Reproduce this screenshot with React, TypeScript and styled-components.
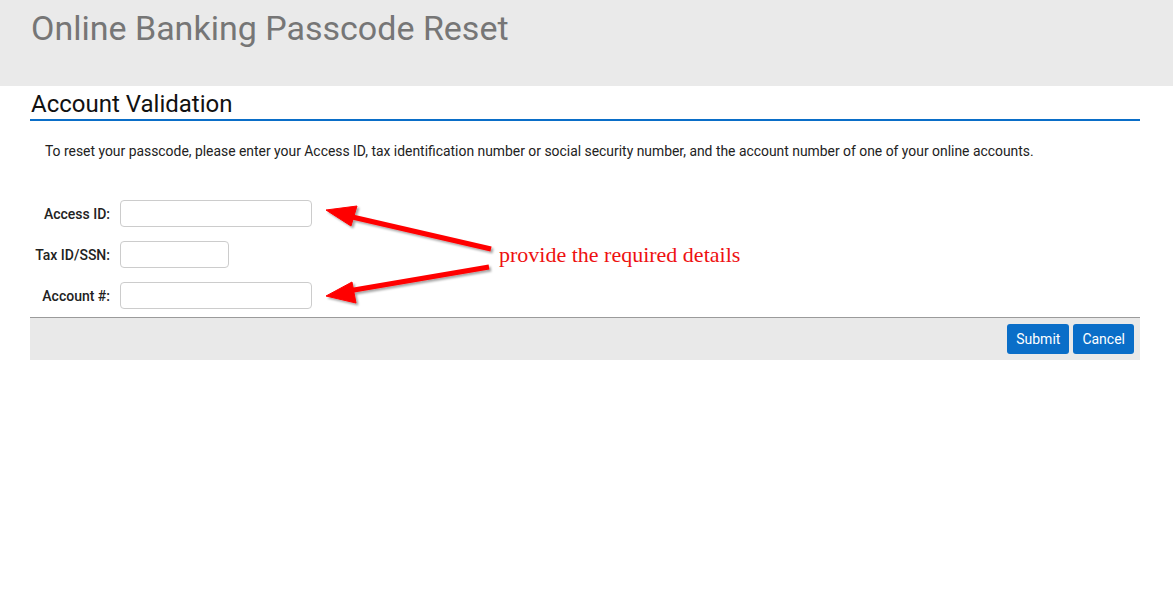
import React from "react";
import styled, { createGlobalStyle } from "styled-components";

const GlobalStyle = createGlobalStyle`
  html, body { margin: 0; padding: 0; background: #ffffff; }
  body { font-family: Roboto, "Liberation Sans", Arial, sans-serif; color: #222; }
  * { box-sizing: border-box; }
`;

const Page = styled.div`
  position: relative;
  width: 1173px;
  min-height: 608px;
`;

const Header = styled.header`
  height: 86px;
  background: #eaeaea;
  padding: 8px 0 0 31px;
`;

const PageTitle = styled.h1`
  margin: 0;
  font-family: Roboto, "Liberation Sans", sans-serif;
  font-weight: 400;
  font-size: 34px;
  line-height: 40px;
  color: #767676;
`;

const Main = styled.main`
  margin: 0 33px 0 30px;
`;

const SectionTitle = styled.h2`
  margin: 4px 0 0;
  padding: 0 0 1px 1px;
  font-weight: 400;
  font-size: 24px;
  line-height: 28px;
  color: #111;
  border-bottom: 2px solid #0a6ec8;
`;

const Intro = styled.p`
  margin: 23px 0 0;
  padding-left: 15px;
  font-size: 13.9px;
  line-height: 15px;
  color: #222;
`;

const Form = styled.div`
  display: grid;
  grid-template-columns: 80px auto;
  column-gap: 10px;
  row-gap: 14px;
  margin-top: 41px;
  align-items: center;
  justify-items: start;
`;

const Label = styled.label`
  justify-self: end;
  font-size: 14px;
  font-weight: 500;
  color: #222;
`;

const Input = styled.input<{ $w: number }>`
  width: ${(p) => p.$w}px;
  height: 27px;
  border: 1px solid #cccccc;
  border-radius: 4px;
  background: #fff;
  outline: none;
  padding: 0 6px;
`;

const Footer = styled.div`
  margin-top: 8px;
  border-top: 1px solid #9b9b9b;
  background: #e9e9e9;
  height: 43px;
  display: flex;
  justify-content: flex-end;
  align-items: flex-start;
  gap: 4px;
  padding: 6px 6px 0 0;
`;

const Button = styled.button`
  height: 30px;
  padding: 0 9px;
  border: none;
  border-radius: 3px;
  background: #0a6ec8;
  color: #fff;
  font-family: Roboto, "Liberation Sans", sans-serif;
  font-size: 14px;
  cursor: pointer;
`;

const Annotation = styled.svg`
  position: absolute;
  left: 0;
  top: 0;
  pointer-events: none;
`;

const NoteText = styled.text`
  font-family: "Liberation Serif", "Times New Roman", serif;
  font-size: 22px;
  fill: #ee1111;
`;

export default function App() {
  return (
    <Page>
      <GlobalStyle />
      <Header>
        <PageTitle>Online Banking Passcode Reset</PageTitle>
      </Header>
      <Main>
        <SectionTitle>Account Validation</SectionTitle>
        <Intro>
          To reset your passcode, please enter your Access ID, tax identification number or social security number, and the account number of one of your online accounts.
        </Intro>
        <Form>
          <Label>Access ID:</Label>
          <Input $w={192} />
          <Label>Tax ID/SSN:</Label>
          <Input $w={109} />
          <Label>Account #:</Label>
          <Input $w={192} />
        </Form>
        <Footer>
          <Button>Submit</Button>
          <Button>Cancel</Button>
        </Footer>
      </Main>
      <Annotation width="1173" height="608" viewBox="0 0 1173 608">
        <defs>
          <filter id="sh" x="-10%" y="-30%" width="130%" height="160%">
            <feDropShadow dx="2" dy="2" stdDeviation="1.2" floodColor="#000" floodOpacity="0.35" />
          </filter>
        </defs>
        <g filter="url(#sh)" fill="#ff0000" stroke="#ff0000">
          <line x1="491" y1="249" x2="348" y2="216" strokeWidth="5" />
          <polygon points="326,210 357,206 351,226" strokeWidth="1" />
          <line x1="489" y1="267" x2="348" y2="291" strokeWidth="5" />
          <polygon points="326,296 352,282 356,303" strokeWidth="1" />
        </g>
        <NoteText x="499" y="262">provide the required details</NoteText>
      </Annotation>
    </Page>
  );
}
